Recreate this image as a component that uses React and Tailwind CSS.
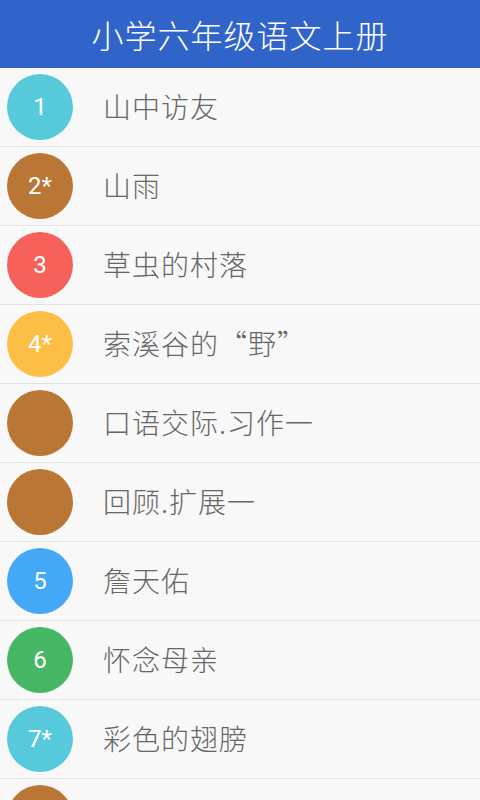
import React from "react";

const items = [
  { n: "1", t: "山中访友", c: "bg-[#56cadb]" },
  { n: "2*", t: "山雨", c: "bg-[#b97634]" },
  { n: "3", t: "草虫的村落", c: "bg-[#f6625a]" },
  { n: "4*", t: "索溪谷的“野”", c: "bg-[#fdbe46]" },
  { n: "", t: "口语交际.习作一", c: "bg-[#b97634]" },
  { n: "", t: "回顾.扩展一", c: "bg-[#b97634]" },
  { n: "5", t: "詹天佑", c: "bg-[#43a8f5]" },
  { n: "6", t: "怀念母亲", c: "bg-[#46b865]" },
  { n: "7*", t: "彩色的翅膀", c: "bg-[#56cadb]" },
  { n: "", t: "", c: "bg-[#b97634]" },
];

export default function App() {
  return (
    <div
      className="w-[480px] h-[800px] overflow-hidden bg-[#f8f8f8] flex flex-col"
      style={{ fontFamily: '"Noto Sans CJK SC", "Noto Sans", sans-serif' }}
    >
      <div className="h-[68px] shrink-0 bg-[#3164c9] flex items-center justify-center">
        <span className="text-white text-[32px] font-light leading-none tracking-[1px]">
          小学六年级语文上册
        </span>
      </div>
      <div className="flex flex-col">
        {items.map((it, i) => (
          <div
            key={i}
            className="h-[79px] shrink-0 flex items-center border-b border-[#e2e2e2] pl-[7px]"
          >
            <div
              className={`w-[66px] h-[66px] shrink-0 rounded-full ${it.c} flex items-center justify-center text-white text-[24px] font-normal`}
              style={{ fontFamily: 'Roboto, "Noto Sans", sans-serif' }}
            >
              {it.n}
            </div>
            <div className="ml-[30px] -mt-[2px] text-[28px] font-light text-[#666666] leading-none tracking-[1px]">
              {it.t}
            </div>
          </div>
        ))}
      </div>
    </div>
  );
}
